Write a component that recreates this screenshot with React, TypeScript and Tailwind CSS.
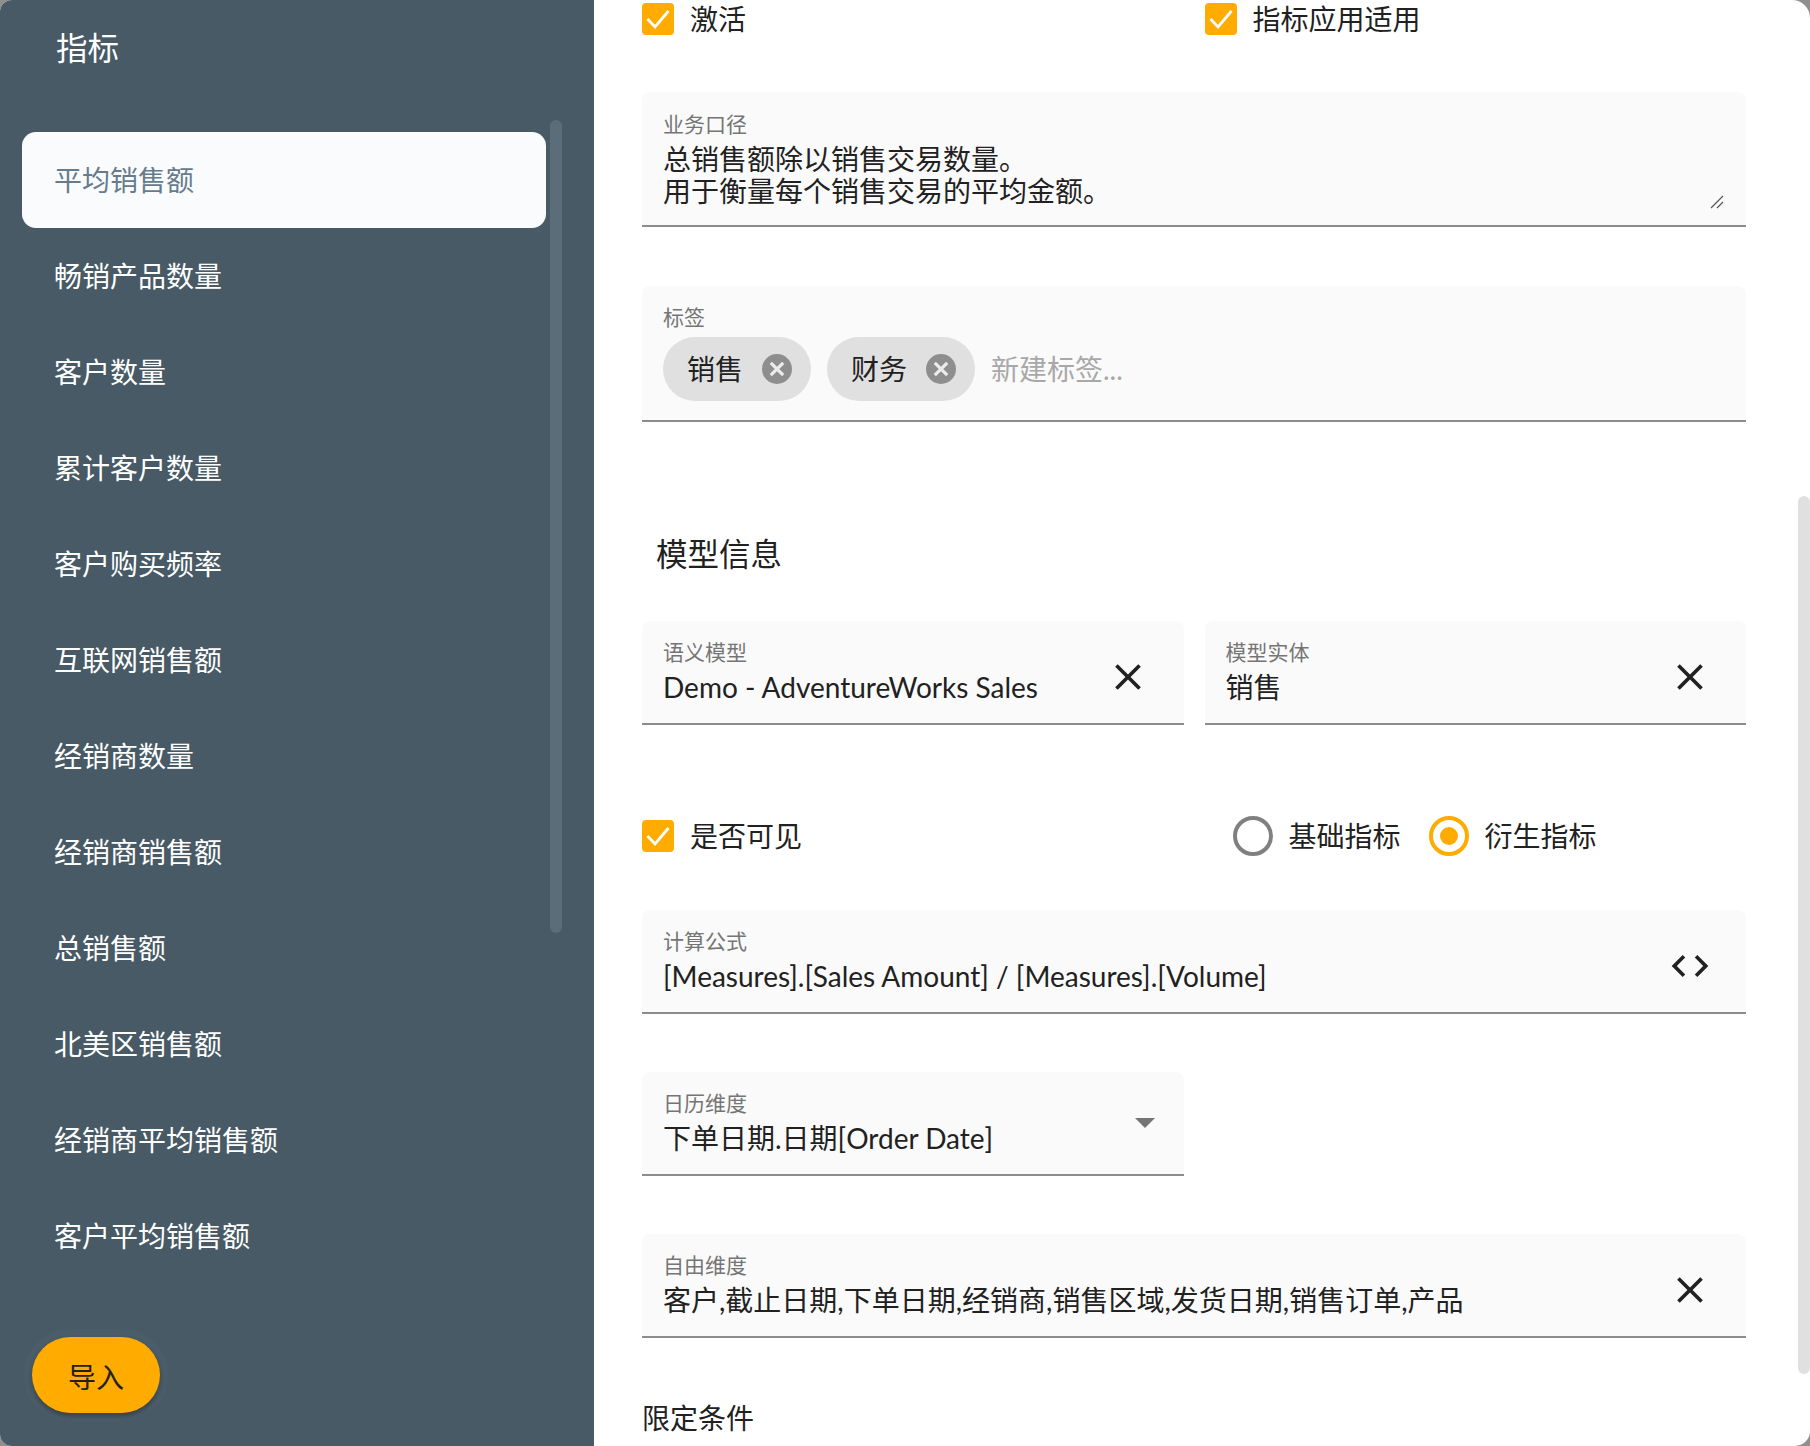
import { ReactNode } from "react";

const font = "font-['Lato','Noto_Sans_CJK_SC',sans-serif]";

const metrics = [
  "平均销售额",
  "畅销产品数量",
  "客户数量",
  "累计客户数量",
  "客户购买频率",
  "互联网销售额",
  "经销商数量",
  "经销商销售额",
  "总销售额",
  "北美区销售额",
  "经销商平均销售额",
  "客户平均销售额",
];

function Checkbox({ label }: { label: string }) {
  return (
    <label className="flex items-center gap-4">
      <span className="flex h-8 w-8 items-center justify-center rounded bg-[#ffab00]">
        <svg viewBox="0 0 32 32" className="h-8 w-8" fill="none" stroke="#fff" strokeWidth="2.8">
          <path d="M5.5 16 13 24 26.5 8" />
        </svg>
      </span>
      <span className="text-[28px] leading-8 text-[#212121]">{label}</span>
    </label>
  );
}

function Radio({ label, checked }: { label: string; checked?: boolean }) {
  return (
    <label className="flex items-center gap-4">
      <span
        className={`flex h-10 w-10 items-center justify-center rounded-full border-4 ${
          checked ? "border-[#ffab00]" : "border-[#808080]"
        }`}
      >
        {checked && <span className="h-[18px] w-[18px] rounded-full bg-[#ffab00]" />}
      </span>
      <span className="text-[28px] leading-8 text-[#212121]">{label}</span>
    </label>
  );
}

function CloseIcon() {
  return (
    <svg viewBox="0 0 24 24" className="h-11 w-11 shrink-0" fill="#212121">
      <path d="M19 6.41 17.59 5 12 10.59 6.41 5 5 6.41 10.59 12 5 17.59 6.41 19 12 13.41 17.59 19 19 17.59 13.41 12z" />
    </svg>
  );
}

function CodeIcon() {
  return (
    <svg viewBox="0 0 24 24" className="h-11 w-11 shrink-0" fill="#212121">
      <path d="M9.4 16.6 4.8 12l4.6-4.6L8 6l-6 6 6 6 1.4-1.4zm5.2 0 4.6-4.6-4.6-4.6L16 6l6 6-6 6-1.4-1.4z" />
    </svg>
  );
}

function DropIcon() {
  return (
    <svg viewBox="0 0 20 10" className="h-2.5 w-5 shrink-0" fill="#757575">
      <path d="M0 0h20L10 10z" />
    </svg>
  );
}

// filled input with the label on top and optional icon on the right
function Field({
  label,
  value,
  icon,
  iconClass = "mt-[34px] pr-[34px]",
}: {
  label: string;
  value: string;
  icon?: ReactNode;
  iconClass?: string;
}) {
  return (
    <div className="flex h-[104px] items-start justify-between rounded-t-lg border-b-2 border-[#8c8c8c] bg-[#fafafa] pl-[21px]">
      <div className="min-w-0 pt-[19px]">
        <div className="text-[21px] leading-6 text-[#757575]">{label}</div>
        <div className="mt-[7px] text-[28px] leading-8 text-[#212121]">{value}</div>
      </div>
      <div className={iconClass}>{icon}</div>
    </div>
  );
}

function Chip({ label }: { label: string }) {
  return (
    <span className="flex h-16 w-[148px] items-center justify-between rounded-full bg-[#e0e0e0] pl-6 pr-[19px]">
      <span className="text-[28px] text-[#212121]">{label}</span>
      <span className="flex h-[30px] w-[30px] items-center justify-center rounded-full bg-[#8e8e8e]">
        <svg viewBox="0 0 16 16" className="h-[18px] w-[18px]" stroke="#ececec" strokeWidth="2.8">
          <path d="M2.5 2.5 13.5 13.5M13.5 2.5 2.5 13.5" />
        </svg>
      </span>
    </span>
  );
}

export default function App() {
  return (
    <div className="h-[1446px] w-[1810px] bg-[#8f8f8f]">
      <div
        className={`relative flex h-full w-full overflow-hidden rounded-tl-[12px] rounded-tr-[18px] rounded-br-[15px] rounded-bl-[12px] bg-white ${font}`}
      >
        <aside className="flex w-[594px] shrink-0 flex-col bg-[#475a65]">
          <h2 className="pl-14 pt-[30px] text-[31.5px] leading-9 text-white">指标</h2>
          <div className="relative mt-[66px] flex-1 pl-[22px] pr-12">
            {metrics.map((name, i) => (
              <div
                key={name}
                className={`flex h-24 items-center rounded-[14px] pl-8 text-[28px] ${
                  i === 0 ? "bg-[#f9fbfd] text-[#667b8c]" : "text-white"
                }`}
              >
                {name}
              </div>
            ))}
            <div className="absolute left-[550px] top-[-12px] h-[813px] w-3 rounded-md bg-[#5b6d79]" />
          </div>
          <div className="pb-[33px] pl-8">
            <button className="h-[76px] w-32 rounded-[38px] bg-[#ffab00] pt-1 text-[28px] text-[#212121] shadow-[0_3px_5px_rgba(0,0,0,0.3),0_0_0_8px_rgba(255,255,255,0.02)]">
              导入
            </button>
          </div>
        </aside>

        <main className="relative flex-1 pl-12 pr-16 pt-[3px]">
          <div className="grid grid-cols-2 gap-x-[21px]">
            <Checkbox label="激活" />
            <Checkbox label="指标应用适用" />
          </div>

          <div className="relative mt-[57px] h-[135px] rounded-t-lg border-b-2 border-[#8c8c8c] bg-[#fafafa] pl-[21px] pt-5">
            <div className="text-[21px] leading-6 text-[#757575]">业务口径</div>
            <div className="mt-[7px] text-[28px] leading-8 text-[#212121]">
              总销售额除以销售交易数量。
              <br />
              用于衡量每个销售交易的平均金额。
            </div>
            <svg viewBox="0 0 14 14" className="absolute bottom-4 right-[22px] h-3.5 w-3.5" stroke="#555" strokeWidth="1.2">
              <path d="M1 13 13 1M7 13 13 7" />
            </svg>
          </div>

          <div className="mt-[59px] h-[136px] rounded-t-lg border-b-2 border-[#8c8c8c] bg-[#fafafa] pl-[21px] pt-[19px]">
            <div className="text-[21px] leading-6 text-[#757575]">标签</div>
            <div className="mt-2 flex items-center gap-4">
              <Chip label="销售" />
              <Chip label="财务" />
              <span className="text-[28px] text-[#a8a8a8]">新建标签...</span>
            </div>
          </div>

          <h3 className="mt-[112px] pl-3.5 text-[31.5px] leading-10 text-[#212121]">模型信息</h3>

          <div className="mt-[47px] grid grid-cols-2 gap-x-[21px]">
            <Field label="语义模型" value="Demo - AdventureWorks Sales" icon={<CloseIcon />} />
            <Field label="模型实体" value="销售" icon={<CloseIcon />} />
          </div>

          <div className="mt-[91px] grid grid-cols-2 gap-x-[21px]">
            <Checkbox label="是否可见" />
            <div className="flex gap-7 pl-7">
              <Radio label="基础指标" />
              <Radio label="衍生指标" checked />
            </div>
          </div>

          <div className="mt-[54px]">
            <Field label="计算公式" value="[Measures].[Sales Amount] / [Measures].[Volume]" icon={<CodeIcon />} />
          </div>

          <div className="mt-[58px] grid grid-cols-2 gap-x-[21px]">
            <Field label="日历维度" value="下单日期.日期[Order Date]" icon={<DropIcon />} iconClass="mt-[46px] pr-[29px]" />
          </div>

          <div className="mt-[58px]">
            <Field label="自由维度" value="客户,截止日期,下单日期,经销商,销售区域,发货日期,销售订单,产品" icon={<CloseIcon />} />
          </div>

          <h3 className="mt-[62px] text-[28px] leading-9 text-[#212121]">限定条件</h3>

          <div className="absolute right-0 top-[496px] h-[878px] w-3 rounded-md bg-[#e0e0e0]" />
        </main>
      </div>
    </div>
  );
}
